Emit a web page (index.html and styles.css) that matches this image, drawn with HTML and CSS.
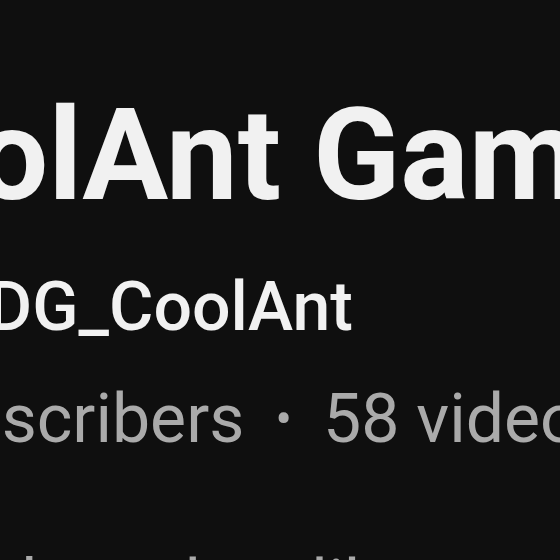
FILE: index.html
```
<!DOCTYPE html>
<html lang="en">
  <head>
    <meta charset="UTF-8">
    <meta name="viewport" content="width=device-width, initial-scale=1.0">
    <title>CoolAnt Gaming</title>
    <link rel="stylesheet" href="styles.css">
  </head>
  <body>
    <div class="canal">
      <h1 class="nombre">CoolAnt Gaming</h1>
      <div class="handle">@ODG_CoolAnt</div>
      <div class="meta">1.2K subscribers <span class="punto">•</span> 58 videos</div>
      <p class="descripcion">to the cubes like your builds</p>
    </div>
  </body>
</html>
```

FILE: styles.css
```
body {
  margin: 0;
  background-color: #0f0f0f;
  font-family: Roboto, 'Liberation Sans', sans-serif;
  overflow: hidden;
  height: 560px;
}
.canal { padding-top: 79px; white-space: nowrap; }
.nombre { margin: 0 0 0 -180px; font-size: 128px; font-weight: 700; line-height: 1.2; color: #f1f1f1; }
.handle { margin: 27px 0 0 -120px; font-size: 68px; font-weight: 500; line-height: 1.4; color: #f1f1f1; }
.meta { margin: 17px 0 0 -263px; font-size: 68px; line-height: 1.4; color: #aaaaaa; }
.punto { margin: 0 14px; font-size: 50px; vertical-align: 6px; }
.descripcion { margin: 71px 0 0 -78px; font-size: 68px; line-height: 1.4; color: #aaaaaa; }
```
